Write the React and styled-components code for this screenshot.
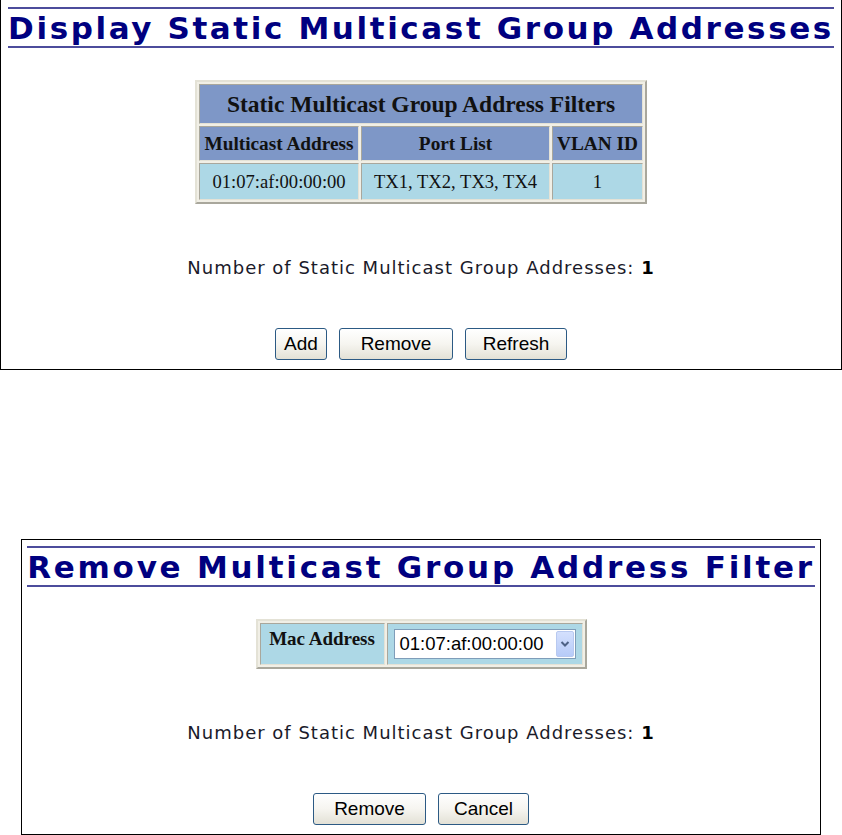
import styled, { createGlobalStyle } from 'styled-components';

const GlobalStyle = createGlobalStyle`
  html, body {
    margin: 0;
    padding: 0;
    background: #ffffff;
  }
  body {
    width: 842px;
    height: 835px;
    overflow: hidden;
  }
`;

const Page = styled.div`
  display: flex;
  flex-direction: column;
  align-items: flex-start;
`;

const Panel = styled.section`
  box-sizing: border-box;
  width: ${(p) => p.$width}px;
  margin-left: ${(p) => p.$left || 0}px;
  margin-top: ${(p) => p.$top || 0}px;
  border: 1px solid #000;
  border-top: ${(p) => (p.$cropped ? 'none' : '1px solid #000')};
  display: flex;
  flex-direction: column;
  align-items: center;
  padding-top: ${(p) => p.$padTop}px;
  padding-bottom: ${(p) => p.$padBottom}px;
`;

const Heading = styled.h1`
  margin: 0;
  padding: 1px 0 0;
  border-top: 2px solid #4c4c9c;
  border-bottom: 2px solid #4c4c9c;
  font-family: 'DejaVu Sans', Verdana, sans-serif;
  font-weight: bold;
  font-size: 31px;
  line-height: 36px;
  letter-spacing: ${(p) => p.$spacing}px;
  color: #000080;
  white-space: nowrap;
`;

const GridTable = styled.table`
  margin-top: ${(p) => p.$top}px;
  border-collapse: separate;
  border-spacing: 2px;
  border: 2px solid;
  border-color: #e4e2d6 #a9a79c #a9a79c #e4e2d6;
  background: #f1efe6;
  font-family: 'Liberation Serif', 'Times New Roman', serif;
  color: #111;
`;

const cellEdge = `
  border: 1px solid;
  border-color: #a9a79c #e4e2d6 #e4e2d6 #a9a79c;
`;

const TitleCell = styled.th`
  ${cellEdge}
  background: #7e97c7;
  font-size: 23.5px;
  font-weight: bold;
  height: 38px;
  padding: 0 8px;
  white-space: nowrap;
`;

const HeadCell = styled.th`
  ${cellEdge}
  background: #7e97c7;
  font-size: 19.3px;
  font-weight: bold;
  height: 33px;
  padding: 0 4px;
  width: ${(p) => p.$w}px;
  white-space: nowrap;
`;

const DataCell = styled.td`
  ${cellEdge}
  background: #add8e6;
  font-size: 18.6px;
  text-align: center;
  height: 35px;
  padding: 0 4px;
  white-space: nowrap;
`;

const LabelCell = styled.th`
  ${cellEdge}
  background: #add8e6;
  font-size: 19px;
  font-weight: bold;
  width: 123px;
  height: 35px;
  vertical-align: top;
  padding: 4px 0 0;
  white-space: nowrap;
`;

const FieldCell = styled.td`
  ${cellEdge}
  background: #add8e6;
  padding: 0 6px;
  height: 40px;
`;

const SelectBox = styled.div`
  box-sizing: border-box;
  width: 182px;
  height: 30px;
  border: 1px solid #7f9db9;
  background: #fff;
  display: flex;
  align-items: center;
  justify-content: space-between;
  padding: 0 1px 0 5px;
  font-family: 'Liberation Sans', Arial, sans-serif;
  font-size: 18.5px;
  color: #000;
`;

const DropButton = styled.span`
  box-sizing: border-box;
  width: 18px;
  height: 26px;
  border: 1px solid #b8c9f0;
  border-radius: 2px;
  background: linear-gradient(#d4e0fd, #b7cbf8);
  display: flex;
  align-items: center;
  justify-content: center;
`;

const Count = styled.p`
  margin: ${(p) => p.$top}px 0 0;
  font-family: 'DejaVu Sans', Verdana, sans-serif;
  font-size: 18px;
  line-height: 22px;
  letter-spacing: 1px;
  color: #1a1a2a;
  white-space: nowrap;

  b {
    color: #000;
  }
`;

const ButtonRow = styled.div`
  margin-top: ${(p) => p.$top}px;
  display: flex;
  gap: 12px;
`;

const Button = styled.button`
  box-sizing: border-box;
  width: ${(p) => p.$w}px;
  height: 32px;
  padding: 0;
  border: 1px solid #2c5a84;
  border-radius: 3px;
  background: linear-gradient(#ffffff 0%, #f6f5f0 50%, #e3e1d6 100%);
  font-family: 'Liberation Sans', Arial, sans-serif;
  font-size: 19px;
  color: #000;
  cursor: pointer;
`;

const Chevron = () => (
  <svg width="10" height="8" viewBox="0 0 10 8">
    <path d="M1.5 2 L5 5.5 L8.5 2" fill="none" stroke="#4d6185" strokeWidth="2" />
  </svg>
);

export default function App() {
  return (
    <>
      <GlobalStyle />
      <Page>
        <Panel $width={842} $cropped $padTop={7} $padBottom={9}>
          <Heading $spacing={2.6}>Display Static Multicast Group Addresses</Heading>
          <GridTable $top={32}>
            <thead>
              <tr>
                <TitleCell colSpan={3}>Static Multicast Group Address Filters</TitleCell>
              </tr>
              <tr>
                <HeadCell $w={150}>Multicast Address</HeadCell>
                <HeadCell $w={179}>Port List</HeadCell>
                <HeadCell $w={77}>VLAN ID</HeadCell>
              </tr>
            </thead>
            <tbody>
              <tr>
                <DataCell>01:07:af:00:00:00</DataCell>
                <DataCell>TX1, TX2, TX3, TX4</DataCell>
                <DataCell>1</DataCell>
              </tr>
            </tbody>
          </GridTable>
          <Count $top={53}>
            Number of Static Multicast Group Addresses: <b>1</b>
          </Count>
          <ButtonRow $top={49}>
            <Button $w={52}>Add</Button>
            <Button $w={114}>Remove</Button>
            <Button $w={102}>Refresh</Button>
          </ButtonRow>
        </Panel>

        <Panel $width={800} $left={21} $top={169} $padTop={6} $padBottom={9}>
          <Heading $spacing={2.75}>Remove Multicast Group Address Filter</Heading>
          <GridTable $top={32}>
            <tbody>
              <tr>
                <LabelCell>Mac Address</LabelCell>
                <FieldCell>
                  <SelectBox role="combobox" aria-label="Mac Address">
                    <span>01:07:af:00:00:00</span>
                    <DropButton>
                      <Chevron />
                    </DropButton>
                  </SelectBox>
                </FieldCell>
              </tr>
            </tbody>
          </GridTable>
          <Count $top={53}>
            Number of Static Multicast Group Addresses: <b>1</b>
          </Count>
          <ButtonRow $top={49}>
            <Button $w={113}>Remove</Button>
            <Button $w={91}>Cancel</Button>
          </ButtonRow>
        </Panel>
      </Page>
    </>
  );
}
